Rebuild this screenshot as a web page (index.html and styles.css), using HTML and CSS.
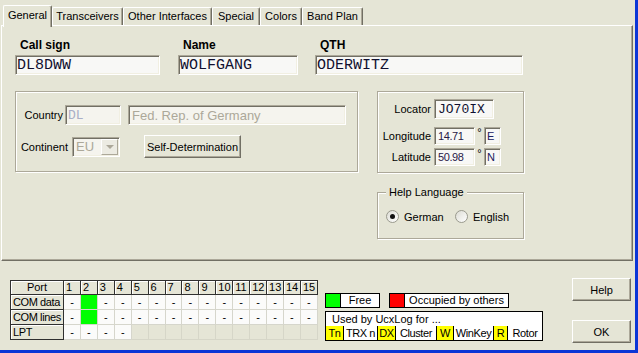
FILE: index.html
```html
<!DOCTYPE html>
<html>
<head>
<meta charset="utf-8">
<link rel="stylesheet" href="styles.css">
</head>
<body>
<div class="win">
  <div class="tabs">
    <div class="tab sel t1">General</div>
    <div class="tab t2">Transceivers</div>
    <div class="tab t3">Other Interfaces</div>
    <div class="tab t4">Special</div>
    <div class="tab t5">Colors</div>
    <div class="tab t6">Band Plan</div>
  </div>
  <div class="panel">
    <div class="idrow">
      <div class="field f-call"><div class="lbl">Call sign</div><div class="inp mono big">DL8DWW</div></div>
      <div class="field f-name"><div class="lbl">Name</div><div class="inp mono big">WOLFGANG</div></div>
      <div class="field f-qth"><div class="lbl">QTH</div><div class="inp mono big">ODERWITZ</div></div>
    </div>
    <div class="mid">
      <div class="grp country">
        <div class="crow r1">
          <span class="clab w1">Country</span>
          <div class="inp dis mono small dl">DL</div>
          <div class="inp dis fed">Fed. Rep. of Germany</div>
        </div>
        <div class="crow r2">
          <span class="clab w2">Continent</span>
          <div class="inp dis combo"><span class="ctext">EU</span><span class="dd"><span class="tri"></span></span></div>
          <div class="btn selfdet">Self-Determination</div>
        </div>
      </div>
      <div class="rightcol">
        <div class="grp loc">
          <div class="lrow lr1"><span class="llab">Locator</span><div class="inp mono small locin">JO70IX</div></div>
          <div class="lrow lr2"><span class="llab">Longitude</span><div class="inp num">14.71</div><span class="deg">°</span><div class="inp dir">E</div></div>
          <div class="lrow lr3"><span class="llab">Latitude</span><div class="inp num">50.98</div><span class="deg">°</span><div class="inp dir">N</div></div>
        </div>
        <div class="grp help">
          <span class="legend">Help Language</span>
          <div class="radios">
            <div class="radio r-de"><span class="rc on"></span><span>German</span></div>
            <div class="radio"><span class="rc"></span><span>English</span></div>
          </div>
        </div>
      </div>
    </div>
  </div>
  <div class="bottom">
    <table class="ports">
      <colgroup><col class="c0"><col><col><col><col><col><col><col><col><col><col><col><col><col><col><col></colgroup>
      <tr class="hr"><th class="port">Port</th><th>1</th><th>2</th><th>3</th><th>4</th><th>5</th><th>6</th><th>7</th><th>8</th><th>9</th><th>10</th><th>11</th><th>12</th><th>13</th><th>14</th><th>15</th></tr>
      <tr><th>COM data</th><td>-</td><td class="g"></td><td>-</td><td>-</td><td>-</td><td>-</td><td>-</td><td>-</td><td>-</td><td>-</td><td>-</td><td>-</td><td>-</td><td>-</td><td>-</td></tr>
      <tr><th>COM lines</th><td>-</td><td class="g"></td><td>-</td><td>-</td><td>-</td><td>-</td><td>-</td><td>-</td><td>-</td><td>-</td><td>-</td><td>-</td><td>-</td><td>-</td><td>-</td></tr>
      <tr><th>LPT</th><td>-</td><td>-</td><td>-</td><td>-</td><td class="e"></td><td class="e"></td><td class="e"></td><td class="e"></td><td class="e"></td><td class="e"></td><td class="e"></td><td class="e"></td><td class="e"></td><td class="e"></td><td class="e"></td></tr>
    </table>
    <div class="legendbox">
      <div class="keys">
        <div class="key kfree"><span class="sw green"></span><span class="kt">Free</span></div>
        <div class="key kocc"><span class="sw red"></span><span class="kt">Occupied by others</span></div>
      </div>
      <div class="used">
        <div class="utitle">Used by UcxLog for ...</div>
        <div class="ucells"><span class="y u1">Tn</span><span class="u2">TRX n</span><span class="y u3">DX</span><span class="u4">Cluster</span><span class="y u5">W</span><span class="u6">WinKey</span><span class="y u7">R</span><span class="u8">Rotor</span></div>
      </div>
    </div>
    <div class="btns">
      <div class="btn bb">Help</div>
      <div class="btn bb ok">OK</div>
    </div>
  </div>
</div>
</body>
</html>
```
FILE: styles.css
```css
* { box-sizing: border-box; }
html, body { margin: 0; padding: 0; }
body {
  font-family: "Liberation Sans", Arial, sans-serif;
  font-size: 11px;
  color: #000;
  background: #e5e5d6;
}
.win {
  width: 638px;
  height: 353px;
  border-right: 3px solid #0b36d6;
  border-bottom: 3px solid #0b36d6;
  background: #e5e5d6;
  overflow: hidden;
}
/* tabs */
.tabs {
  display: flex;
  align-items: flex-end;
  height: 25px;
  padding-left: 3px;
  position: relative;
  z-index: 1;
}
.tab {
  height: 18px;
  line-height: 17px;
  text-align: center;
  border-top: 1px solid #fff;
  border-left: 1px solid #fff;
  border-right: 1px solid #716f64;
  border-radius: 2px 2px 0 0;
  box-shadow: inset -1px 0 0 #aca899;
  white-space: nowrap;
  background: #e5e5d6;
}
.tab.sel { height: 22px; margin-bottom: -2px; line-height: 19px; }
.t1 { width: 49px; }
.t2 { width: 71px; }
.t3 { width: 89px; }
.t4 { width: 48px; }
.t5 { width: 42px; }
.t6 { width: 61px; }
/* panel */
.panel {
  margin-left: 1px;
  width: 632px;
  height: 236px;
  border: 1px solid;
  border-color: #fff #716f64 #716f64 #fff;
  box-shadow: inset -1px -1px 0 #aca899;
  padding: 12px 0 0 13px;
}
.idrow { display: flex; }
.f-call { width: 145px; }
.f-name { width: 120px; margin-left: 18px; }
.f-qth { width: 208px; margin-left: 17px; }
.lbl {
  font-weight: bold;
  font-size: 12px;
  line-height: 14px;
  padding-left: 5px;
  margin-bottom: 3px;
}
.inp {
  height: 20px;
  border: 1px solid;
  border-color: #aca899 #fff #fff #aca899;
  box-shadow: inset 1px 1px 0 #716f64, inset -1px -1px 0 #f1efe2;
  background: #f8f8f6;
  padding-left: 2px;
  display: flex;
  align-items: center;
  white-space: nowrap;
  overflow: hidden;
}
.mono { font-family: "Liberation Mono", "Courier New", monospace; color: #101030; }
.big { font-size: 15px; padding-left: 1px; }
.small { font-size: 13px; }
.dis { background: #f5f4ee; color: #aca899; }
.mid { display: flex; margin-top: 16px; }
.grp {
  border: 1px solid #aca899;
  box-shadow: inset 1px 1px 0 #fff, 1px 1px 0 #fff;
}
.country { width: 343px; height: 81px; padding-top: 13px; }
.crow { display: flex; align-items: center; }
.r1 { height: 20px; }
.r2 { height: 23px; margin-top: 10px; }
.clab { text-align: right; }
.w1 { width: 49px; padding-right: 2px; }
.w2 { width: 56px; padding-right: 4px; }
.dl { width: 56px; color: #a9aec6; }
.fed { width: 218px; margin-left: 7px; font-size: 13px; padding-left: 3px; }
.combo { width: 48px; font-size: 13px; padding: 0 1px 0 3px; justify-content: space-between; }
.dd {
  width: 17px;
  height: 16px;
  border: 1px solid;
  border-color: #fff #aca899 #aca899 #fff;
  background: #ecebe2;
  display: flex;
  align-items: center;
  justify-content: center;
}
.tri {
  width: 0; height: 0;
  border-left: 4px solid transparent;
  border-right: 4px solid transparent;
  border-top: 4px solid #aca899;
}
.btn {
  height: 23px;
  border: 1px solid;
  border-color: #fff #716f64 #716f64 #fff;
  box-shadow: inset -1px -1px 0 #aca899;
  background: #e5e5d6;
  display: flex;
  align-items: center;
  justify-content: center;
  white-space: nowrap;
}
.selfdet { width: 97px; margin-left: 24px; }
.rightcol { margin-left: 19px; }
.loc { width: 147px; height: 82px; padding-top: 7px; }
.lrow { display: flex; align-items: center; }
.lr1 { height: 20px; }
.lr2 { height: 18px; margin-top: 8px; }
.lr3 { height: 18px; margin-top: 3px; }
.llab { width: 53px; text-align: right; margin-right: 3px; white-space: nowrap; }
.locin { width: 60px; height: 20px; padding-left: 3px; }
.num { width: 41px; height: 18px; color: #281848; letter-spacing: -0.4px; padding-left: 3px; }
.lrow .inp.num, .lrow .inp.dir { height: 18px; }
.deg { width: 9px; align-self: flex-start; text-align: center; font-size: 11px; line-height: 10px; }
.dir { width: 17px; color: #202060; }
.help { width: 147px; height: 47px; margin-top: 19px; position: relative; padding: 17px 0 0 8px; }
.legend {
  position: absolute;
  top: -7px;
  left: 8px;
  padding: 0 3px;
  background: #e5e5d6;
  line-height: 13px;
}
.radios { display: flex; align-items: center; height: 13px; }
.radio { display: flex; align-items: center; gap: 5px; }
.r-de { width: 69px; }
.rc {
  width: 13px; height: 13px;
  border-radius: 50%;
  border: 1px solid #9a9a8e;
  background: linear-gradient(135deg, #dcdcd4, #fff);
  display: flex; align-items: center; justify-content: center;
}
.rc.on::after {
  content: "";
  width: 5px; height: 5px;
  border-radius: 50%;
  background: #101010;
}
/* bottom */
.bottom { display: flex; padding: 17px 0 0 10px; }
.ports {
  border-collapse: collapse;
  table-layout: fixed;
  width: 308px;
  height: 60px;
  margin-top: 2px;
  background: #fbfbfa;
  border: 1px solid #303030;
}
.ports col.c0 { width: 53px; }
.ports tr { height: 15px; }
.ports tr.hr { height: 14px; }
.ports th, .ports td {
  padding: 0;
  height: 14px;
  font-weight: normal;
  font-size: 11px;
  line-height: 11px;
  white-space: nowrap;
  overflow: hidden;
}
.ports th {
  border: 1px solid #303030;
  background: #e5e5d6;
  box-shadow: inset 1px 1px 0 #fff;
  text-align: left;
  padding-left: 2px;
  letter-spacing: -0.4px;
}
.ports th.port { text-align: center; padding-left: 0; letter-spacing: 0; }
.ports tr.hr th { letter-spacing: 0; height: 13px; }
.ports td { border: 1px solid #d6d6cc; text-align: center; }
.ports td.g { background: #00ff00; }
.ports td.e { background: #e5e5d6; border-color: #d6d6c8; }
.legendbox { margin: 15px 0 0 7px; }
.keys { display: flex; }
.key {
  height: 15px;
  border: 1px solid #000;
  background: #fff;
  display: flex;
  line-height: 13px;
}
.kfree { width: 55px; }
.kocc { width: 120px; margin-left: 9px; }
.sw { width: 15px; border-right: 1px solid #000; }
.green { background: #00ff00; }
.red { background: #ff0000; }
.kt { flex: 1; text-align: center; }
.used {
  width: 218px;
  height: 30px;
  margin-top: 3px;
  border: 1px solid #000;
  background: #fff;
}
.utitle { height: 14px; line-height: 14px; padding-left: 6px; }
.ucells { display: flex; height: 14px; line-height: 14px; letter-spacing: -0.4px; }
.ucells span { border-right: 1px solid #000; text-align: center; white-space: nowrap; }
.ucells span:last-child { border-right: 0; flex: 1; }
.y { background: #ffff00; }
.u1 { width: 18px; }
.u2 { width: 34px; }
.u3 { width: 18px; }
.u4 { width: 41px; }
.u5 { width: 17px; }
.u6 { width: 40px; }
.u7 { width: 14px; }
.btns { margin-left: auto; margin-right: 4px; }
.bb { width: 59px; }
.ok { margin-top: 19px; }
```
